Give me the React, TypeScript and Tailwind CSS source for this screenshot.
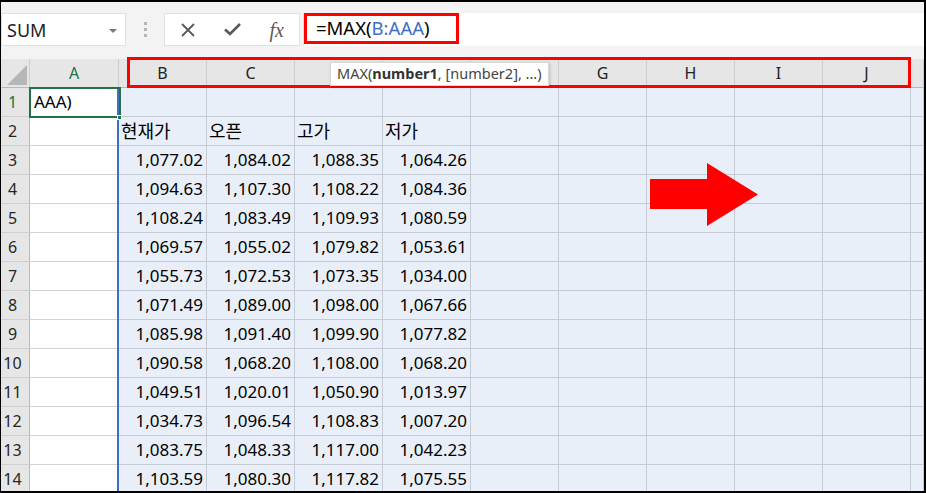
import React from "react";

const rows: string[][] = [
  ["1,077.02", "1,084.02", "1,088.35", "1,064.26"],
  ["1,094.63", "1,107.30", "1,108.22", "1,084.36"],
  ["1,108.24", "1,083.49", "1,109.93", "1,080.59"],
  ["1,069.57", "1,055.02", "1,079.82", "1,053.61"],
  ["1,055.73", "1,072.53", "1,073.35", "1,034.00"],
  ["1,071.49", "1,089.00", "1,098.00", "1,067.66"],
  ["1,085.98", "1,091.40", "1,099.90", "1,077.82"],
  ["1,090.58", "1,068.20", "1,108.00", "1,068.20"],
  ["1,049.51", "1,020.01", "1,050.90", "1,013.97"],
  ["1,034.73", "1,096.54", "1,108.83", "1,007.20"],
  ["1,083.75", "1,048.33", "1,117.00", "1,042.23"],
  ["1,103.59", "1,080.30", "1,117.82", "1,075.55"],
];

// D, E, F sit under the function tooltip, so their letters are not shown
const cols = ["A", "B", "C", "", "", "", "G", "H", "I", "J", ""];
const blueCols = 10; // B..K

function RowCells({ n, a, cells, left }: { n: number; a?: string; cells: string[]; left?: boolean }) {
  return (
    <>
      <div
        className={`bg-[#e6e6e6] border-r border-b border-r-[#b9b9b9] border-b-[#d0d0d0] flex items-center justify-center pr-[5px] text-[16px] ${
          n === 1 ? "text-[#217346]" : "text-[#262626]"
        }`}
      >
        {n}
      </div>
      <div className="bg-white border-r border-b border-[#d4d4d4] flex items-center pl-[4px] text-[17px] text-black">
        {a}
      </div>
      {Array.from({ length: blueCols }).map((_, i) => (
        <div
          key={i}
          className={`bg-[#e9eff8] border-r border-b border-[#c6cbd3] flex items-center text-black ${
            left ? "justify-start pl-[2px] text-[18px]" : "justify-end pr-[3px] text-[17px]"
          }`}
        >
          {cells[i] ?? ""}
        </div>
      ))}
    </>
  );
}

export default function App() {
  return (
    <div className="relative w-[926px] h-[493px] overflow-hidden border-t-2 border-l border-r-2 border-b-2 border-black bg-[#f3f3f3] font-['Noto_Sans','Noto_Sans_CJK_KR',sans-serif]">
      {/* Formula bar */}
      <div className="flex items-start h-[57px] pt-[11px]">
        <div className="relative w-[125px] h-[33px] bg-white border border-[#e1e1e1] flex items-center pl-[5px] pt-[1px] text-[18px] text-[#222]">
          SUM
          <svg className="absolute right-[8px] top-[15px]" width="8" height="4" viewBox="0 0 8 4">
            <path d="M0 0 L8 0 L4 4 Z" fill="#7a7a7a" />
          </svg>
        </div>
        <div className="w-[38px] h-[33px] flex flex-col items-center justify-center gap-[3px]">
          <span className="w-[3px] h-[3px] bg-[#b5b5b5]" />
          <span className="w-[3px] h-[3px] bg-[#b5b5b5]" />
          <span className="w-[3px] h-[3px] bg-[#b5b5b5]" />
        </div>
        <div className="w-[136px] h-[33px] bg-white border border-[#e1e1e1] flex items-center">
          <div className="w-[45px] flex justify-center pl-[2px]">
            <svg width="14" height="14" viewBox="0 0 14 14">
              <path d="M1 1 L13 13 M13 1 L1 13" stroke="#5a5a5a" strokeWidth="1.8" />
            </svg>
          </div>
          <div className="w-[45px] flex justify-center">
            <svg width="17" height="13" viewBox="0 0 17 13">
              <path d="M1 6.5 L6 11 L16 1" stroke="#5a5a5a" strokeWidth="2.6" fill="none" />
            </svg>
          </div>
          <div className="w-[45px] flex justify-center text-[20px] italic text-[#5a5a5a] font-['Liberation_Serif',serif] leading-none">
            fx
          </div>
        </div>
        <div className="relative ml-[3px] flex-1 h-[33px] bg-white border-l border-[#e1e1e1] flex items-center pl-[12px] pb-[3px] text-[18.5px] text-black">
          <span>=MAX(</span>
          <span className="text-[#3f6fc4]">B:AAA</span>
          <span>)</span>
          <div className="absolute left-0 top-0 w-[155px] h-[31px] border-[3px] border-[#ff0000]" />
        </div>
      </div>

      {/* Grid */}
      <div className="grid grid-cols-[29px_89px_repeat(9,88px)_1fr] auto-rows-[29px]">
        <div className="bg-[#e6e6e6] border-r border-b border-r-[#cfcfcf] border-b-[#b9b9b9] flex items-end justify-end pr-[2px] pb-[2px]">
          <svg width="20" height="20" viewBox="0 0 20 20">
            <path d="M20 0 L20 20 L0 20 Z" fill="#b6b6b6" />
          </svg>
        </div>
        {cols.map((c, i) => (
          <div
            key={i}
            className={`bg-[#e6e6e6] border-r border-b border-r-[#cdcdcd] border-b-[#b9b9b9] flex items-center justify-center text-[16px] ${
              c === "A" ? "text-[#217346]" : "text-[#222]"
            }`}
          >
            {c}
          </div>
        ))}
        <RowCells n={1} a="AAA)" cells={[]} />
        <RowCells n={2} cells={["현재가", "오픈", "고가", "저가"]} left />
        {rows.map((r, i) => (
          <RowCells key={i} n={i + 3} cells={r} />
        ))}
      </div>

      {/* Range border of B:AAA */}
      <div className="absolute left-[116px] top-[86px] w-[2px] h-[420px] bg-[#3c6fc6]" />

      {/* Active cell A1 */}
      <div className="absolute left-[28px] top-[85px] w-[92px] h-[31px] border-2 border-[#217346]" />
      <div className="absolute left-[116px] top-[113px] w-[5px] h-[5px] bg-[#217346] border border-white" />

      {/* Highlight box around column headers */}
      <div className="absolute left-[126px] top-[55px] w-[784px] h-[31px] border-[3px] border-[#ff0000]" />

      {/* Function tooltip */}
      <div className="absolute left-[329px] top-[60px] w-[219px] h-[24px] bg-white border border-[#d8d8d8] shadow-[1px_1px_3px_rgba(0,0,0,0.18)] flex items-center pl-[6px] text-[14.5px] text-[#444] whitespace-nowrap">
        MAX(<span className="font-bold text-[#333]">number1</span>, [number2], ...)
      </div>

      {/* Arrow */}
      <svg className="absolute left-[649px] top-[161px]" width="110" height="65" viewBox="0 0 110 65">
        <path d="M0 16 L57 16 L57 0 L108 31.5 L57 63 L57 46 L0 46 Z" fill="#ff0000" />
      </svg>
    </div>
  );
}
